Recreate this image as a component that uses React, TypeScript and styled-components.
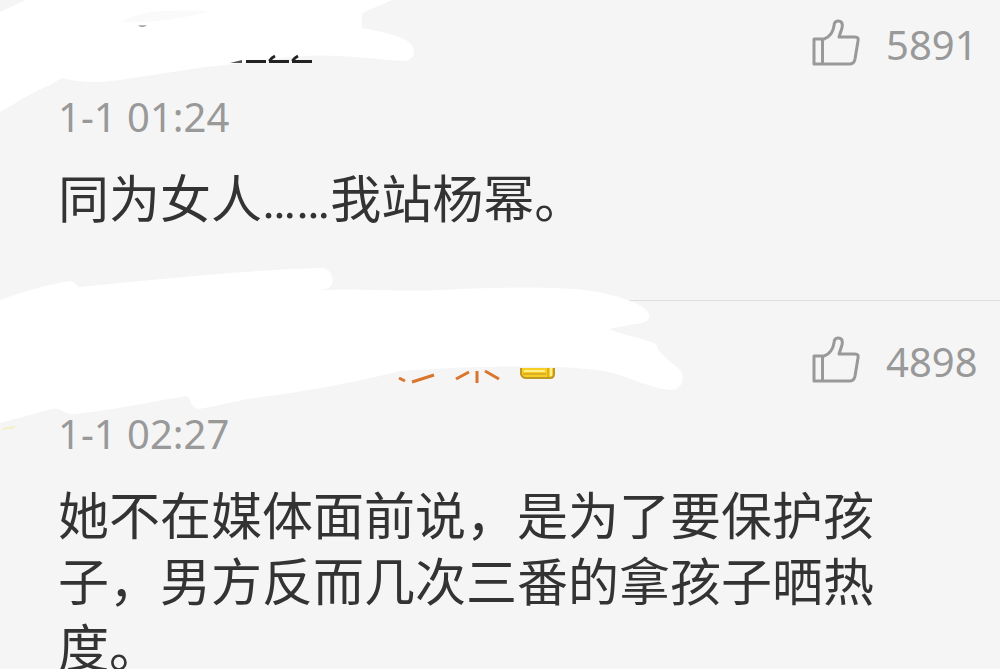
import React from "react";
import styled, { createGlobalStyle } from "styled-components";

const GlobalStyle = createGlobalStyle`
  body {
    margin: 0;
    background: #f5f5f5;
    font-family: Roboto, "Noto Sans CJK SC", sans-serif;
  }
`;

const Page = styled.main`
  height: 100vh;
  overflow: hidden;
  background: #f5f5f5;
`;

const Comment = styled.article<{ $first?: boolean }>`
  position: relative;
  padding: ${(p) => (p.$first ? "15px" : "31px")} 20px 66px 58px;
  border-top: ${(p) => (p.$first ? "none" : "1px solid #dedede")};
`;

const Header = styled.header`
  display: flex;
  justify-content: flex-end;
`;

const LikeButton = styled.button`
  display: flex;
  align-items: center;
  gap: 24px;
  width: 170px;
  height: 60px;
  padding: 0;
  border: 0;
  background: none;
  color: #999;
  font: 400 40px/60px "Noto Sans", sans-serif;
  cursor: pointer;
`;

const ThumbIcon = styled.svg`
  width: 52px;
  height: 52px;
  flex: none;
`;

const Time = styled.time`
  display: block;
  padding-top: 15px;
  color: #999;
  font-family: "Noto Sans", sans-serif;
  font-size: 40px;
  line-height: 54px;
`;

const Body = styled.p`
  margin: 24px 90px 0 0;
  color: #333;
  font-size: 51px;
  line-height: 66px;
`;

const Scribble = styled.svg<{ $top: number }>`
  position: absolute;
  left: 0;
  top: ${(p) => p.$top}px;
  pointer-events: none;
`;

function Like({ count }: { count: number }) {
  return (
    <LikeButton type="button" aria-label={`${count} likes`}>
      <ThumbIcon
        viewBox="0 0 52 52"
        fill="none"
        stroke="#999"
        strokeWidth="3"
        strokeLinejoin="round"
        aria-hidden="true"
      >
        <path d="M4 20H14C20 18 23 13 24 7C24 3 26 2 28 2C32 2 33 5 32 9L29 18H45Q49 18 48 22L45 40Q44 45 40 45H4Z" />
        <path d="M12.500 20V45" />
      </ThumbIcon>
      {count}
    </LikeButton>
  );
}

export default function App() {
  return (
    <>
      <GlobalStyle />
      <Page>
        <Comment $first>
          <Scribble $top={0} width="420" height="120" viewBox="0 0 420 120" aria-hidden="true">
            <path
              fill="#fff"
              d="M0 12L26 0H392C380 6 368 9 362 14V28C384 32 402 36 410 43C417 50 414 59 406 61C380 60 340 54 305 56C270 58 240 64 205 67L120 80C98 83 80 83 62 78L48 86C32 92 15 104 0 112Z"
            />
            <path fill="#fafafa" d="M122 22C136 12 156 9 212 11C190 16 160 24 122 22Z" />
            <path fill="#777" d="M138 25.500Q142 28 147 25.500Z" />
            <path fill="none" stroke="#222" strokeWidth="3" d="M246 61.500H266M269 61.500H289M292 61.500H312" />
            <path fill="none" stroke="#222" strokeWidth="3" d="M269.500 61Q271 58 275 56M292.500 61Q294 58 298 56" />
            <path fill="#555" d="M230 63L242 60V63Z" />
          </Scribble>
          <Header>
            <Like count={5891} />
          </Header>
          <Time>1-1 01:24</Time>
          <Body>同为女人……我站杨幂。</Body>
        </Comment>
        <Comment>
          <Scribble $top={-41} width="700" height="180" viewBox="0 260 700 180" aria-hidden="true">
            <path
              fill="#fff"
              d="M0 300C22 292 48 284 72 281L79 287C160 279 245 270 323 268C334 270 335 284 329 288L320 290C360 288 400 292 440 290C490 287 560 286 598 292C622 297 641 303 648 312C652 320 646 323 634 324L609 329C626 336 643 338 656 344C658 356 677 364 682 373C684 382 681 389 671 390C650 389 627 375 604 371C560 363 450 367 400 371C370 379 300 393 253 398C232 402 212 407 199 409C189 407 193 401 187 396C150 402 113 410 75 414C62 415 63 407 52 409L0 423Z"
            />
            <path
              fill="none"
              stroke="#d9752c"
              strokeWidth="3"
              d="M399 378L405 381M412 382L434 375M456 379L469 372M477 371V383M485 371L499 379"
            />
            <path fill="#f5cf25" stroke="#bd9824" strokeWidth="2" d="M521 368V374Q522 378 526 378H550Q554 378 554 374V368" />
            <path fill="none" stroke="#fff08a" strokeWidth="2" d="M524 371H545M551 368V376" />
            <path fill="none" stroke="#c98e1e" strokeWidth="1" d="M523 374H546M548 368V377" />
            <path fill="none" stroke="#f4efc4" strokeWidth="2" d="M3 429L15 427" />
          </Scribble>
          <Header>
            <Like count={4898} />
          </Header>
          <Time>1-1 02:27</Time>
          <Body>她不在媒体面前说，是为了要保护孩子，男方反而几次三番的拿孩子晒热度。</Body>
        </Comment>
      </Page>
    </>
  );
}
